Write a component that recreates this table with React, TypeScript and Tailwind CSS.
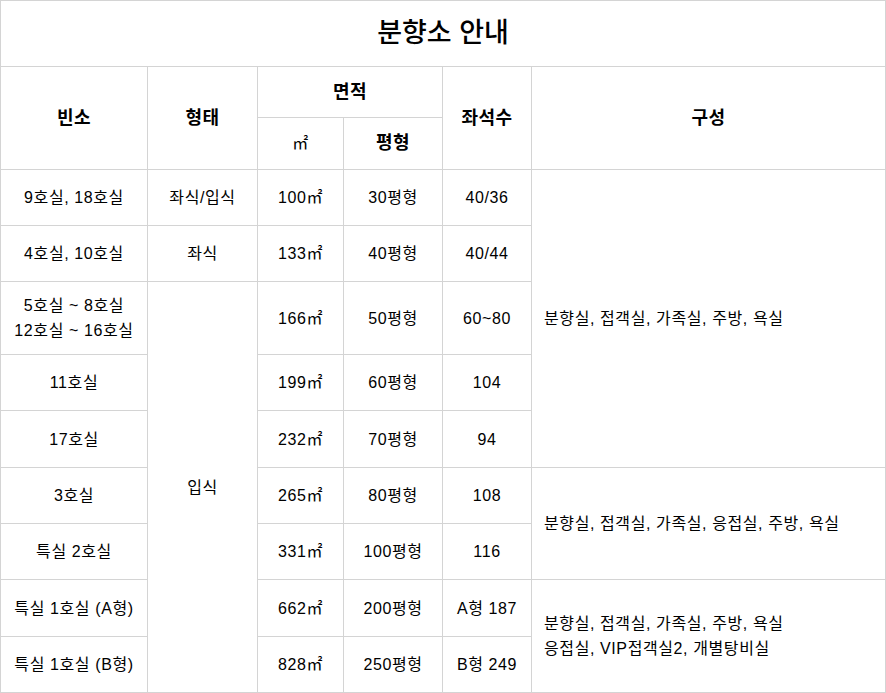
import React from "react";

const font = { fontFamily: '"Liberation Sans", "Noto Sans CJK KR", sans-serif' };

type Row = {
  room: React.ReactNode;
  area: string;
  pyeong: string;
  seats: string;
  h: string;
};

const rows: Row[] = [
  { room: "9호실, 18호실", area: "100㎡", pyeong: "30평형", seats: "40/36", h: "h-[56px]" },
  { room: "4호실, 10호실", area: "133㎡", pyeong: "40평형", seats: "40/44", h: "h-[56px]" },
  {
    room: (
      <>
        5호실 ~ 8호실
        <br />
        12호실 ~ 16호실
      </>
    ),
    area: "166㎡",
    pyeong: "50평형",
    seats: "60~80",
    h: "h-[73px]",
  },
  { room: "11호실", area: "199㎡", pyeong: "60평형", seats: "104", h: "h-[56px]" },
  { room: "17호실", area: "232㎡", pyeong: "70평형", seats: "94", h: "h-[57px]" },
  { room: "3호실", area: "265㎡", pyeong: "80평형", seats: "108", h: "h-[56px]" },
  { room: "특실 2호실", area: "331㎡", pyeong: "100평형", seats: "116", h: "h-[56px]" },
  { room: "특실 1호실 (A형)", area: "662㎡", pyeong: "200평형", seats: "A형 187", h: "h-[57px]" },
  { room: "특실 1호실 (B형)", area: "828㎡", pyeong: "250평형", seats: "B형 249", h: "h-[56px]" },
];

const td = "border border-[#d4d4d4] text-center align-middle p-0";
const th = "border border-[#d4d4d4] text-center align-middle p-0 font-bold text-[18px] tracking-[0.5px]";

function typeCell(i: number) {
  if (i === 0) return <td className={td}>좌식/입식</td>;
  if (i === 1) return <td className={td}>좌식</td>;
  if (i === 2)
    return (
      <td rowSpan={7} className={td}>
        입식
      </td>
    );
  return null;
}

function compCell(i: number) {
  const cls = "border border-[#d4d4d4] text-left align-middle pl-[12px] py-0";
  if (i === 0)
    return (
      <td rowSpan={5} className={cls}>
        분향실, 접객실, 가족실, 주방, 욕실
      </td>
    );
  if (i === 5)
    return (
      <td rowSpan={2} className={cls}>
        분향실, 접객실, 가족실, 응접실, 주방, 욕실
      </td>
    );
  if (i === 7)
    return (
      <td rowSpan={2} className={cls}>
        분향실, 접객실, 가족실, 주방, 욕실
        <br />
        응접실, VIP접객실2, 개별탕비실
      </td>
    );
  return null;
}

export default function App() {
  return (
    <div className="bg-white w-[886px] h-[693px] text-black" style={font}>
      <table className="w-[886px] border-collapse table-fixed text-[16px] leading-[25px] tracking-[0.6px]">
        <colgroup>
          <col className="w-[147px]" />
          <col className="w-[110px]" />
          <col className="w-[86px]" />
          <col className="w-[99px]" />
          <col className="w-[89px]" />
          <col />
        </colgroup>
        <thead>
          <tr className="h-[66px]">
            <th colSpan={6} className="border border-[#d4d4d4] text-center align-middle font-medium text-[27px] tracking-normal p-0">
              분향소 안내
            </th>
          </tr>
          <tr className="h-[51px]">
            <th rowSpan={2} className={th}>
              빈소
            </th>
            <th rowSpan={2} className={th}>
              형태
            </th>
            <th colSpan={2} className={th}>
              면적
            </th>
            <th rowSpan={2} className={th}>
              좌석수
            </th>
            <th rowSpan={2} className={th}>
              구성
            </th>
          </tr>
          <tr className="h-[52px]">
            <th className="border border-[#d4d4d4] text-center align-middle p-0 font-normal text-[16px]">㎡</th>
            <th className={th}>평형</th>
          </tr>
        </thead>
        <tbody>
          {rows.map((r, i) => (
            <tr key={i} className={r.h}>
              <td className={td}>{r.room}</td>
              {typeCell(i)}
              <td className={td}>{r.area}</td>
              <td className={td}>{r.pyeong}</td>
              <td className={td}>{r.seats}</td>
              {compCell(i)}
            </tr>
          ))}
        </tbody>
      </table>
    </div>
  );
}
